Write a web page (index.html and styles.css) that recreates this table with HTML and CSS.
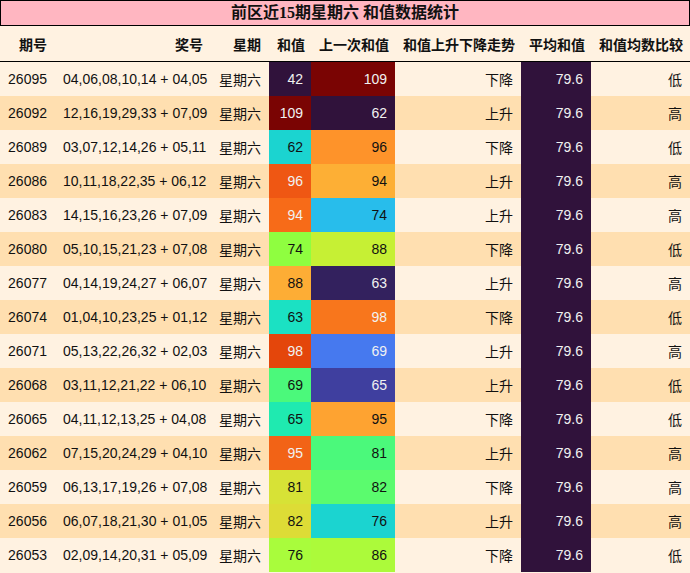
FILE: index.html
```html
<!DOCTYPE html>
<html lang="zh">
<head>
<meta charset="utf-8">
<title>前区近15期星期六 和值数据统计</title>
<link rel="stylesheet" href="styles.css">
</head>
<body>
<table class="stats">
  <caption class="title">前区近15期星期六 和值数据统计</caption>
  <colgroup>
    <col class="c1"><col class="c2"><col class="c3"><col class="c4"><col class="c5"><col class="c6"><col class="c7"><col class="c8">
  </colgroup>
  <thead>
    <tr><th>期号</th><th>奖号</th><th>星期</th><th>和值</th><th>上一次和值</th><th>和值上升下降走势</th><th>平均和值</th><th>和值均数比较</th></tr>
  </thead>
  <tbody>
    <tr class="odd"><td>26095</td><td>04,06,08,10,14 + 04,05</td><td>星期六</td><td class="dk" style="background:#30123b">42</td><td class="dk" style="background:#7a0403">109</td><td>下降</td><td class="avg">79.6</td><td>低</td></tr>
    <tr class="even"><td>26092</td><td>12,16,19,29,33 + 07,09</td><td>星期六</td><td class="dk" style="background:#7a0403">109</td><td class="dk" style="background:#30123b">62</td><td>上升</td><td class="avg">79.6</td><td>高</td></tr>
    <tr class="odd"><td>26089</td><td>03,07,12,14,26 + 05,11</td><td>星期六</td><td style="background:#1bd4d0">62</td><td style="background:#fe932a">96</td><td>下降</td><td class="avg">79.6</td><td>低</td></tr>
    <tr class="even"><td>26086</td><td>10,11,18,22,35 + 06,12</td><td>星期六</td><td class="dk" style="background:#ef5713">96</td><td style="background:#fdaf35">94</td><td>上升</td><td class="avg">79.6</td><td>高</td></tr>
    <tr class="odd"><td>26083</td><td>14,15,16,23,26 + 07,09</td><td>星期六</td><td class="dk" style="background:#f76b18">94</td><td style="background:#28bdeb">74</td><td>上升</td><td class="avg">79.6</td><td>高</td></tr>
    <tr class="even"><td>26080</td><td>05,10,15,21,23 + 07,08</td><td>星期六</td><td style="background:#8ffe40">74</td><td style="background:#c6f034">88</td><td>下降</td><td class="avg">79.6</td><td>低</td></tr>
    <tr class="odd"><td>26077</td><td>04,14,19,24,27 + 06,07</td><td>星期六</td><td style="background:#fdad35">88</td><td class="dk" style="background:#33215e">63</td><td>上升</td><td class="avg">79.6</td><td>高</td></tr>
    <tr class="even"><td>26074</td><td>01,04,10,23,25 + 01,12</td><td>星期六</td><td style="background:#1be1c3">63</td><td class="dk" style="background:#f8761c">98</td><td>下降</td><td class="avg">79.6</td><td>低</td></tr>
    <tr class="odd"><td>26071</td><td>05,13,22,26,32 + 02,03</td><td>星期六</td><td class="dk" style="background:#e4460b">98</td><td class="dk" style="background:#4679ef">69</td><td>上升</td><td class="avg">79.6</td><td>高</td></tr>
    <tr class="even"><td>26068</td><td>03,11,12,21,22 + 06,10</td><td>星期六</td><td style="background:#4bf97b">69</td><td class="dk" style="background:#3f3f9f">65</td><td>上升</td><td class="avg">79.6</td><td>低</td></tr>
    <tr class="odd"><td>26065</td><td>04,11,12,13,25 + 04,08</td><td>星期六</td><td style="background:#1feab0">65</td><td style="background:#fea331">95</td><td>下降</td><td class="avg">79.6</td><td>低</td></tr>
    <tr class="even"><td>26062</td><td>07,15,20,24,29 + 04,10</td><td>星期六</td><td class="dk" style="background:#f26316">95</td><td style="background:#4bf97b">81</td><td>上升</td><td class="avg">79.6</td><td>高</td></tr>
    <tr class="odd"><td>26059</td><td>06,13,17,19,26 + 07,08</td><td>星期六</td><td style="background:#d7e236">81</td><td style="background:#5bfb6e">82</td><td>下降</td><td class="avg">79.6</td><td>高</td></tr>
    <tr class="even"><td>26056</td><td>06,07,18,21,30 + 01,05</td><td>星期六</td><td style="background:#dddc36">82</td><td style="background:#1bd4d0">76</td><td>上升</td><td class="avg">79.6</td><td>高</td></tr>
    <tr class="odd"><td>26053</td><td>02,09,14,20,31 + 05,09</td><td>星期六</td><td style="background:#a9fc3c">76</td><td style="background:#acfa3a">86</td><td>下降</td><td class="avg">79.6</td><td>低</td></tr>
  </tbody>
</table>
</body>
</html>
```

FILE: styles.css
```css
html, body {
  margin: 0;
  padding: 0;
  background: #fff2e1;
}

.stats {
  width: 690px;
  border-collapse: collapse;
  table-layout: fixed;
  font-family: "Liberation Sans", "Noto Sans CJK SC", sans-serif;
  font-size: 14px;
  color: #000;
}

.title {
  box-sizing: border-box;
  height: 26px;
  background: #ffb6c1;
  border: 1px solid #000;
  font-family: "Liberation Serif", "Noto Sans CJK SC", serif;
  font-weight: bold;
  font-size: 16px;
  line-height: 24px;
  text-align: center;
  color: #111;
}

.c1 { width: 55px; }
.c2 { width: 156px; }
.c3 { width: 58px; }
.c4 { width: 42px; }
.c5 { width: 84px; }
.c6 { width: 126px; }
.c7 { width: 70px; }
.c8 { width: 99px; }

thead th {
  height: 35px;
  padding: 0 8px;
  background: #fff2e1;
  border-bottom: 1px solid #000;
  font-weight: bold;
  text-align: right;
  color: #111;
  white-space: nowrap;
}

tbody td {
  height: 34px;
  padding: 0 8px;
  text-align: right;
  white-space: nowrap;
  color: #111;
}

tbody tr.odd td { background-color: #fff2e1; }
tbody tr.even td { background-color: #ffdfb0; }

tbody td.dk { color: #f1f1f1; }

tbody tr td.avg {
  background: #30123b;
  color: #f1f1f1;
}
```
